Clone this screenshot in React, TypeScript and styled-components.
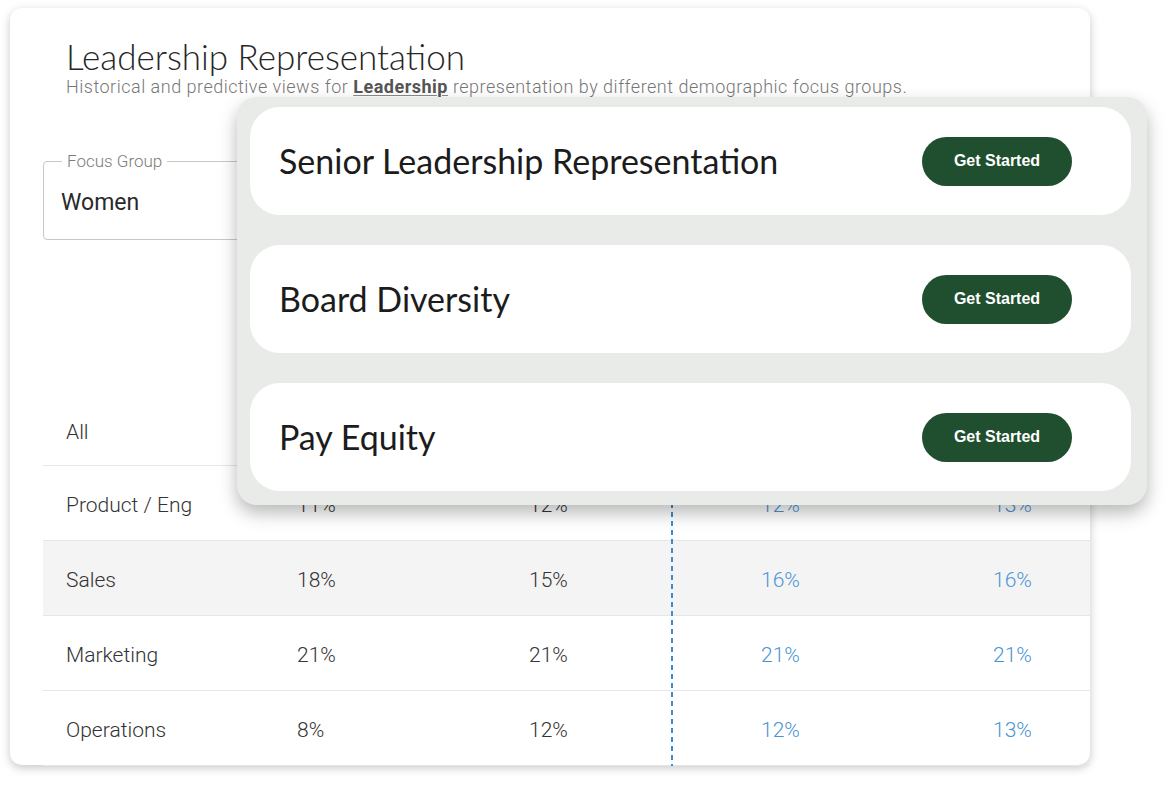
import * as React from "react";
import styled, { createGlobalStyle } from "styled-components";

type Row = {
  label: string;
  values: [string, string, string, string];
  shaded?: boolean;
};

const ROWS: Row[] = [
  { label: "Product / Eng", values: ["11%", "12%", "12%", "13%"] },
  { label: "Sales", values: ["18%", "15%", "16%", "16%"], shaded: true },
  { label: "Marketing", values: ["21%", "21%", "21%", "21%"] },
  { label: "Operations", values: ["8%", "12%", "12%", "13%"] },
];

const PROGRAMS = [
  "Senior Leadership Representation",
  "Board Diversity",
  "Pay Equity",
];

const App: React.FC = () => {
  return (
    <>
      <GlobalStyle />
      <Page>
        <Card>
          <Header>
            <Title>Leadership Representation</Title>
            <Subtitle>
              Historical and predictive views for <Strong>Leadership</Strong>{" "}
              representation by different demographic focus groups.
            </Subtitle>
          </Header>

          <FocusField>
            <legend>Focus Group</legend>
            <FieldValue>Women</FieldValue>
          </FocusField>

          <Table>
            <TableRow $height={71}>
              <LabelCell>All</LabelCell>
            </TableRow>
            {ROWS.map((row) => (
              <TableRow key={row.label} $shaded={row.shaded}>
                <LabelCell>{row.label}</LabelCell>
                {row.values.map((value, index) => (
                  <ValueCell key={index} $predicted={index >= 2}>
                    {value}
                  </ValueCell>
                ))}
              </TableRow>
            ))}
            <Divider />
          </Table>

          <Overlay>
            {PROGRAMS.map((name) => (
              <ProgramCard key={name}>
                <ProgramName>{name}</ProgramName>
                <StartButton>Get Started</StartButton>
              </ProgramCard>
            ))}
          </Overlay>
        </Card>
      </Page>
    </>
  );
};

export default App;

const GlobalStyle = createGlobalStyle`
  html, body {
    margin: 0;
    padding: 0;
    background: #ffffff;
  }
  body {
    font-family: Roboto, "Noto Sans", sans-serif;
    color: #2b2b2b;
  }
`;

const Page = styled.div`
  width: 1168px;
  height: 785px;
  padding: 8px 0 0 10px;
  box-sizing: border-box;
  overflow: hidden;
`;

const Card = styled.div`
  position: relative;
  width: 1080px;
  height: 757px;
  background: #ffffff;
  border-radius: 12px;
  box-shadow: 0 3px 10px rgba(0, 0, 0, 0.22);
  padding: 29px 0 0 33px;
  box-sizing: border-box;
`;

const Header = styled.div`
  padding-left: 23px;
`;

const Title = styled.h1`
  margin: 0;
  font-family: Lato, sans-serif;
  font-size: 35px;
  font-weight: 300;
  line-height: 38px;
  color: #262626;
`;

const Subtitle = styled.p`
  margin: 2px 0 0;
  font-size: 18px;
  line-height: 20px;
  font-weight: 300;
  letter-spacing: 0.5px;
  color: #777777;
`;

const Strong = styled.span`
  font-weight: 700;
  color: #555555;
  text-decoration: underline 1px;
  text-decoration-color: #8a8a8a;
  text-underline-offset: 2px;
`;

const FocusField = styled.fieldset`
  margin: 54px 0 0;
  width: 360px;
  height: 89px;
  box-sizing: border-box;
  border: 1px solid #c8c8c8;
  border-radius: 4px;
  padding: 0 17px;

  & > legend {
    padding: 0 5px;
    margin-left: 1px;
    font-size: 17px;
    font-weight: 300;
    color: #7c7c7c;
  }
`;

const FieldValue = styled.div`
  font-size: 23px;
  color: #2a2a2a;
  margin-top: 18px;
`;

const Table = styled.div`
  position: relative;
  margin-top: 155px;
  width: 1047px;
`;

const TableRow = styled.div<{ $shaded?: boolean; $height?: number }>`
  display: grid;
  grid-template-columns: 231px 232px 232px 232px 1fr;
  align-items: center;
  box-sizing: border-box;
  height: ${(p) => p.$height ?? 75}px;
  padding: 3px 0 0 23px;
  background: ${(p) => (p.$shaded ? "#f4f4f4" : "transparent")};
  border-bottom: 1px solid #e6e6e6;
  font-size: 21px;
  font-weight: 300;
`;

const LabelCell = styled.div`
  color: #333333;
`;

const ValueCell = styled.div<{ $predicted: boolean }>`
  color: ${(p) => (p.$predicted ? "#4a94d4" : "#333333")};
`;

const Divider = styled.div`
  position: absolute;
  left: 628px;
  top: 0;
  bottom: 0;
  width: 2px;
  background: repeating-linear-gradient(
    to bottom,
    #3d8bd0 0 5px,
    transparent 5px 9px
  );
`;

const Overlay = styled.div`
  position: absolute;
  left: 227px;
  top: 89px;
  width: 910px;
  height: 408px;
  box-sizing: border-box;
  padding: 10px 16px 14px 13px;
  background: #e9ebe8;
  border-radius: 20px;
  box-shadow: 0 8px 18px rgba(0, 0, 0, 0.28);
  display: flex;
  flex-direction: column;
  gap: 30px;
`;

const ProgramCard = styled.div`
  flex: 1;
  display: flex;
  align-items: center;
  justify-content: space-between;
  background: #ffffff;
  border-radius: 30px;
  padding: 0 59px 0 29px;
`;

const ProgramName = styled.div`
  font-family: Lato, sans-serif;
  font-size: 34px;
  color: #1c1c1c;
  margin-top: -2px;
`;

const StartButton = styled.button`
  width: 150px;
  height: 49px;
  border: none;
  border-radius: 25px;
  background: #1f4f2f;
  color: #ffffff;
  font-family: "Liberation Sans", Arial, sans-serif;
  font-weight: 700;
  font-size: 16px;
  cursor: pointer;
`;
